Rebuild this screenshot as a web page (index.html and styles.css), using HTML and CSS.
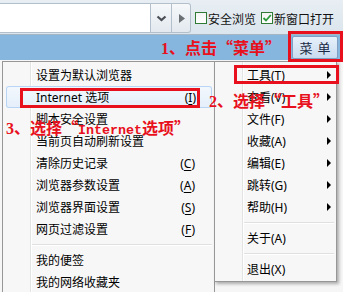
FILE: index.html
```html
<!DOCTYPE html>
<html lang="zh-CN">
<head>
<meta charset="utf-8">
<title>菜单</title>
<link rel="stylesheet" href="styles.css">
</head>
<body>
<div class="toolbar">
  <div class="addr"></div>
  <div class="tbtn drop"><svg width="11" height="7" viewBox="0 0 11 7"><path d="M1.5 1.5 L5.5 5 L9.5 1.5" fill="none" stroke="#4a4f55" stroke-width="2.2"/></svg></div>
  <div class="tbtn go"><svg width="6" height="9" viewBox="0 0 6 9"><polygon points="0,0 6,4.5 0,9" fill="#6b7075"/></svg></div>
  <label class="chk"><span class="box"></span>安全浏览</label>
  <label class="chk second"><span class="box"><svg width="10" height="10" viewBox="0 0 10 10"><path d="M1.5 5 L4 7.5 L8.8 2" fill="none" stroke="#2a9a3a" stroke-width="1.8"/></svg></span>新窗口打开</label>
</div>
<div class="bluebar">
  <div class="menubtn">菜 单</div>
</div>
<div class="page">
  <ul class="menu sub">
    <li class="it">设置为默认浏览器</li>
    <li class="it hover">Internet 选项<span class="key">(<u>I</u>)</span></li>
    <li class="it">脚本安全设置</li>
    <li class="it">当前页自动刷新设置</li>
    <li class="it">清除历史记录<span class="key">(<u>C</u>)</span></li>
    <li class="it">浏览器参数设置<span class="key">(<u>A</u>)</span></li>
    <li class="it">浏览器界面设置<span class="key">(<u>S</u>)</span></li>
    <li class="it">网页过滤设置<span class="key">(<u>F</u>)</span></li>
    <li class="sep"></li>
    <li class="it">我的便签</li>
    <li class="it">我的网络收藏夹</li>
  </ul>
  <ul class="menu main">
    <li class="it">工具(T)<span class="arrow"></span></li>
    <li class="it">查看(V)<span class="arrow"></span></li>
    <li class="it">文件(F)<span class="arrow"></span></li>
    <li class="it">收藏(A)<span class="arrow"></span></li>
    <li class="it">编辑(E)<span class="arrow"></span></li>
    <li class="it">跳转(G)<span class="arrow"></span></li>
    <li class="it">帮助(H)<span class="arrow"></span></li>
    <li class="sep"></li>
    <li class="it">关于(A)</li>
    <li class="sep"></li>
    <li class="it">退出(X)</li>
  </ul>
</div>
<div class="mark box1"></div>
<div class="mark box2"></div>
<div class="mark box3"></div>
<div class="note note1"><span class="num">1</span>、点击“菜单”</div>
<div class="note note2"><span class="num">2</span>、选择“工具”</div>
<div class="note note3"><span class="num">3</span>、选择“<span class="lat">Internet</span>选项”</div>
</body>
</html>
```
FILE: styles.css
```css
* { box-sizing: border-box; margin: 0; padding: 0; }
html, body { width: 343px; height: 292px; overflow: hidden; }
body {
  position: relative;
  font-family: "Noto Sans", "Noto Sans CJK SC", sans-serif;
  font-size: 12px;
  color: #000;
  background: #f2f2f2;
}

.toolbar {
  height: 35px;
  display: flex;
  align-items: flex-start;
  padding-top: 3px;
  background: linear-gradient(#e8eef3, #dbe5ed);
  border-bottom: 1px solid #a7b6c4;
}
.addr {
  width: 151px;
  height: 30px;
  background: #fff;
  border: 1px solid #b3c0cc;
  border-left: none;
}
.tbtn {
  height: 30px;
  display: flex;
  align-items: center;
  justify-content: center;
  background: linear-gradient(#f6f8fa, #e3e9ef);
  border: 1px solid #b3c0cc;
  border-left: none;
}
.drop { width: 21px; }
.go { width: 19px; border-radius: 0 3px 3px 0; padding-left: 1px; }
.chk {
  display: flex;
  align-items: center;
  gap: 1px;
  height: 30px;
  margin-left: 4px;
  font-size: 12px;
  font-family: "Noto Sans CJK SC", sans-serif;
  color: #111;
}
.chk.second { margin-left: 5px; }
.box {
  width: 12px;
  height: 12px;
  border: 1px solid #2f7a34;
  background: linear-gradient(#f4f4f4, #ffffff);
  display: flex;
  align-items: center;
  justify-content: center;
}

.bluebar {
  height: 25px;
  background: #86b5de;
  display: flex;
  justify-content: flex-end;
  align-items: center;
  padding-right: 5px;
}
.menubtn {
  width: 46px;
  height: 23px;
  display: flex;
  align-items: center;
  justify-content: center;
  font-family: "Noto Sans CJK SC", sans-serif;
  font-size: 13px;
  color: #1b2a44;
  background: linear-gradient(#e6f0fa, #c9dcf0);
  border: 1px solid #7f9fc3;
  border-radius: 2px;
  white-space: pre;
  word-spacing: 2px;
}

.page {
  position: relative;
  height: 232px;
  overflow: hidden;
  background: #f6f6f6;
}
.menu {
  position: absolute;
  top: 1px;
  list-style: none;
  background-color: #f7f7f7;
  border: 1px solid #979797;
  padding: 2px 0 1px;
}
.menu .it {
  height: 22px;
  display: flex;
  align-items: center;
  white-space: nowrap;
}
.sub {
  left: 2px;
  width: 213px;
  height: 240px;
  background-image: linear-gradient(to right, transparent 27px, #e2e3e3 27px, #e2e3e3 28px, #ffffff 28px, #ffffff 29px, transparent 29px);
}
.sub .it { padding-left: 33px; padding-right: 19px; }
.sub .it.hover {
  margin: 0 2px 0 3px;
  padding-left: 30px;
  padding-right: 16px;
  border-radius: 3px;
  background: linear-gradient(#f3f8fd, #e4eefa);
  box-shadow: inset 0 0 0 1px #b9d5f5;
}
.key { margin-left: auto; }
.key u { text-decoration-thickness: 1px; text-underline-offset: 2px; }

.main {
  left: 214px;
  width: 123px;
  box-shadow: 2px 2px 3px rgba(0, 0, 0, 0.3);
  background-image: linear-gradient(to right, transparent 27px, #e2e3e3 27px, #e2e3e3 28px, #ffffff 28px, #ffffff 29px, transparent 29px);
}
.main .it { padding-left: 32px; padding-right: 5px; }
.arrow {
  margin-left: auto;
  width: 0;
  height: 0;
  border-left: 4px solid #000;
  border-top: 4px solid transparent;
  border-bottom: 4px solid transparent;
}
.sep { height: 9px; position: relative; }
.sep::after {
  content: "";
  position: absolute;
  left: 29px;
  right: 2px;
  top: 4px;
  border-top: 1px solid #e0e0e0;
  border-bottom: 1px solid #ffffff;
}

.mark {
  position: absolute;
  border: 3px solid #e8101c;
}
.box1 { left: 288px; top: 31px; width: 55px; height: 31px; }
.box2 { left: 234px; top: 65px; width: 105px; height: 19px; }
.box3 { left: 20px; top: 88px; width: 180px; height: 20px; }

.note {
  position: absolute;
  font-family: "Noto Sans CJK SC", sans-serif;
  font-weight: 700;
  font-size: 16px;
  line-height: 16px;
  color: #e8101c;
  white-space: nowrap;
}
.num { font-family: "Liberation Serif", serif; font-weight: 700; }
.lat { font-family: "Liberation Mono", monospace; font-weight: 700; font-size: 13.33px; }
.note1 { left: 161px; top: 39px; }
.note2 { left: 209px; top: 92px; }
.note3 { left: 6px; top: 119px; }
```
